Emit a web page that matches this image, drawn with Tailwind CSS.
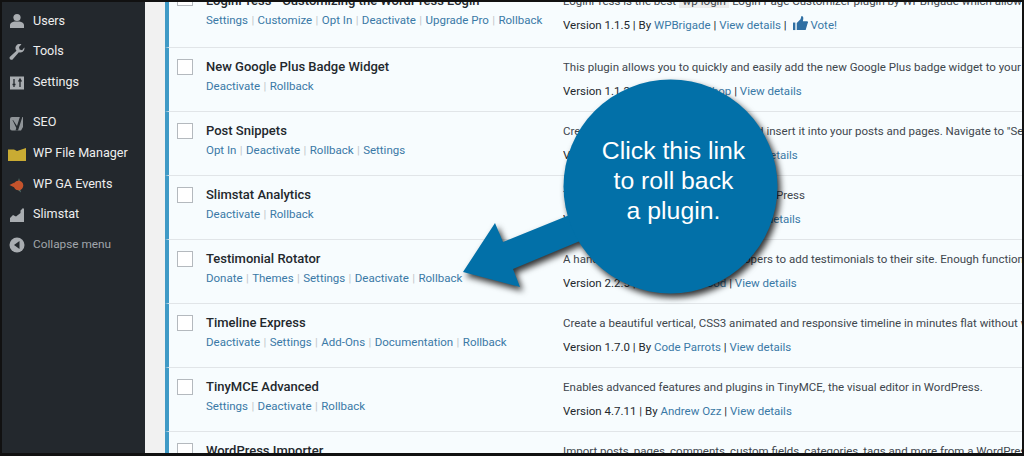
<!DOCTYPE html>
<html>
<head>
    <title>Plugins</title>
    <script src="https://cdn.jsdelivr.net/npm/@tailwindcss/browser@4"></script>
    <meta name="viewport" content="width=device-width, initial-scale=1.0">
</head>
<body class="bg-[#f1f1f1]">
<div class="relative w-[1024px] h-[456px] overflow-hidden flex font-['Roboto',sans-serif]">

    <!-- Admin menu -->
    <div class="w-[145px] shrink-0 bg-[#23282d] pt-[6px] text-[12.600px] text-[#eeeeee]">
        <div class="h-[30px] flex items-center gap-[8px] pl-[9px]">
            <svg class="w-[16px] h-[16px]" viewBox="0 0 16 16" fill="#a9adb1"><circle cx="8" cy="4.500" r="3.600"/><path d="M1 15v-3c0-2 2-3 4.500-3.500h5C13 9 15 10 15 12v3z"/></svg>
            <span>Users</span>
        </div>
        <div class="h-[31px] flex items-center gap-[8px] pl-[9px]">
            <svg class="w-[16px] h-[16px]" viewBox="0 0 16 16" fill="#a9adb1"><path d="M15.500 4.200a4.200 4.200 0 0 1-5.600 4L4 15a1.800 1.800 0 0 1-3-2.200l6.500-6A4.200 4.200 0 0 1 12.500.300L10 3l.6 2.600 2.500.6 2.200-2.600z"/></svg>
            <span>Tools</span>
        </div>
        <div class="h-[31px] flex items-center gap-[8px] pl-[9px]">
            <svg class="w-[16px] h-[16px]" viewBox="0 0 16 16"><rect x="1" y="1.500" width="14" height="13" fill="#a9adb1"/><path d="M5 4v8M3.500 9.500h3M11 12V4M9.500 6.500 11 4l1.500 2.500" stroke="#23282d" stroke-width="1.300" fill="none"/></svg>
            <span>Settings</span>
        </div>
        <div class="h-[31px] mt-[9px] flex items-center gap-[8px] pl-[9px]">
            <svg class="w-[16px] h-[16px]" viewBox="0 0 16 16"><path d="M3 2h11v10l-2 3.500H3a2 2 0 0 1-2-2V4a2 2 0 0 1 2-2z" fill="#8f9498"/><path d="M4 5 8 11l3-9.500h2.500L9 15.500H6.500l.8-2.500L3.500 5z" fill="#23282d"/></svg>
            <span>SEO</span>
        </div>
        <div class="h-[31px] flex items-center gap-[7px] pl-[8px]">
            <svg class="w-[18px] h-[16px]" viewBox="0 0 18 16"><path d="M0 3.500h6L9 5l9-3v13H0z" fill="#c9ab33"/></svg>
            <span>WP File Manager</span>
        </div>
        <div class="h-[31px] flex items-center gap-[8px] pl-[9px]">
            <svg class="w-[16px] h-[16px]" viewBox="0 0 16 16"><path d="M10 1l1 4h-2zM11 12l1 3.500-3-2.500z" fill="#5d7a74"/><path d="M.500 8l5-2.500v5z" fill="#c4532c"/><circle cx="9.500" cy="8.500" r="4.800" fill="#c4532c"/></svg>
            <span>WP GA Events</span>
        </div>
        <div class="h-[29px] flex items-center gap-[8px] pl-[9px]">
            <svg class="w-[16px] h-[16px]" viewBox="0 0 16 16" fill="#a9adb1"><path d="M1 15v-4l3-3 3 1.500L11.500 6V3.500L14 1l1 1v13z"/></svg>
            <span>Slimstat</span>
        </div>
        <div class="h-[31px] flex items-center gap-[8px] pl-[9px] text-[#a0a5aa] text-[11.800px]">
            <svg class="w-[16px] h-[16px]" viewBox="0 0 16 16"><circle cx="8" cy="8" r="7.500" fill="#a9adb1"/><path d="M10.500 4v8L5 8z" fill="#23282d"/></svg>
            <span>Collapse menu</span>
        </div>
    </div>

    <!-- Plugin table -->
    <div class="ml-[20px] flex-1 min-w-0 -mt-[18px]" id="rows"></div>

    <!-- Callout -->
    <svg class="absolute left-0 top-0 drop-shadow-[3px_4px_3px_rgba(0,0,0,0.8)]" width="1024" height="456" viewBox="0 0 1024 456">
        <path d="M463 272 495 223 503 242 572 214 580 241 513 269 520 287Z" fill="#0270a8"/>
        <circle cx="670.500" cy="186.500" r="107" fill="#0270a8"/>
    </svg>
    <div class="absolute left-[566px] top-[136px] w-[215px] text-center text-white text-[24.800px] leading-[30px] font-['Liberation_Sans',sans-serif]">
        Click this link<br>to roll back<br>a plugin.
    </div>

    <!-- Screenshot frame -->
    <div class="absolute inset-0 border-t-[2px] border-l-[2px] border-r-[2px] border-b-[3px] border-[#111111] pointer-events-none"></div>
</div>

<script>
const linkClass = 'text-[#3a79a6]';
const rows = [
    { name: 'LoginPress - Customizing the WordPress Login', actions: ['Settings','Customize','Opt In','Deactivate','Upgrade Pro','Rollback'],
      desc: 'LoginPress is the best <span class="bg-[#ececec]">`wp-login`</span> Login Page Customizer plugin by WPBrigade which allows you',
      ver: '1.1.5', by: 'WPBrigade', vote: true },
    { name: 'New Google Plus Badge Widget', actions: ['Deactivate','Rollback'],
      desc: 'This plugin allows you to quickly and easily add the new Google Plus badge widget to your site.',
      ver: '1.1.2', by: 'IT Widget Shop' },
    { name: 'Post Snippets', actions: ['Opt In','Deactivate','Rollback','Settings'],
      desc: 'Create a library of reusable content and insert it into your posts and pages. Navigate to "Settings"',
      ver: '2.5.4', by: 'David Aguilera' },
    { name: 'Slimstat Analytics', actions: ['Deactivate','Rollback'],
      desc: 'The leading web analytics plugin for WordPress',
      ver: '4.8.0', by: 'Jason Crouses' },
    { name: 'Testimonial Rotator', actions: ['Donate','Themes','Settings','Deactivate','Rollback'],
      desc: 'A handy plugin for WordPress developers to add testimonials to their site. Enough functionality for',
      ver: '2.2.5', by: 'Hal Gatewood' },
    { name: 'Timeline Express', actions: ['Deactivate','Settings','Add-Ons','Documentation','Rollback'],
      desc: 'Create a beautiful vertical, CSS3 animated and responsive timeline in minutes flat without writing code.',
      ver: '1.7.0', by: 'Code Parrots' },
    { name: 'TinyMCE Advanced', actions: ['Settings','Deactivate','Rollback'],
      desc: 'Enables advanced features and plugins in TinyMCE, the visual editor in WordPress.',
      ver: '4.7.11', by: 'Andrew Ozz' },
    { name: 'WordPress Importer', actions: ['Deactivate','Rollback'],
      desc: 'Import posts, pages, comments, custom fields, categories, tags and more from a WordPress export file.',
      ver: '0.6.4', by: 'wordpressdotorg' }
];

const thumb = `<svg class="inline-block w-[15px] h-[15px] mx-[3px] align-[-2px]" viewBox="0 0 16 16" fill="#2f6fa3"><rect x="0" y="7" width="2.500" height="8"/><path d="M4 7.500 8 3.500 9 0c2 0 2.500 2 1.500 5.500H15c1.200 0 1.300 1.500.6 2.200L13.500 15H4z"/></svg>`;

// the top row is partly scrolled away and sits 2px taller than the others
document.getElementById('rows').innerHTML = rows.map(r => `
    <div class="group h-[64px] first:h-[66px] border-l-[4px] border-l-[#3f9ac6] border-b border-b-[#e1e5e8] bg-[#f7fcfe] flex overflow-hidden">
        <div class="w-[394px] shrink-0 flex">
            <div class="w-[16px] h-[16px] ml-[8px] mt-[11px] group-first:mt-[8px] bg-white border border-[#b4b9be] shrink-0"></div>
            <div class="ml-[13px] pt-[9px]">
                <div class="text-[13px] leading-[20px] font-medium text-[#23282d] whitespace-nowrap">${r.name}</div>
                <div class="text-[11.500px] leading-[20px] -mt-[1px] whitespace-nowrap text-[#c3c7ca] flex gap-[3.400px]">
                    ${r.actions.map(a => `<span class="${linkClass}">${a}</span>`).join('<span>|</span>')}
                </div>
            </div>
        </div>
        <div class="flex-1 min-w-0 pt-[9px] text-[11.500px] whitespace-nowrap overflow-hidden">
            <div class="leading-[20px] text-[#40464d]">${r.desc}</div>
            <div class="leading-[20px] mt-[4px] text-[#23282d]">Version ${r.ver} | By <span class="${linkClass}">${r.by}</span> | <span class="${linkClass}">View details</span>${r.vote ? ' | ' + thumb + '<span class="' + linkClass + '">Vote!</span>' : ''}</div>
        </div>
    </div>
`).join('');
</script>
</body>
</html>
